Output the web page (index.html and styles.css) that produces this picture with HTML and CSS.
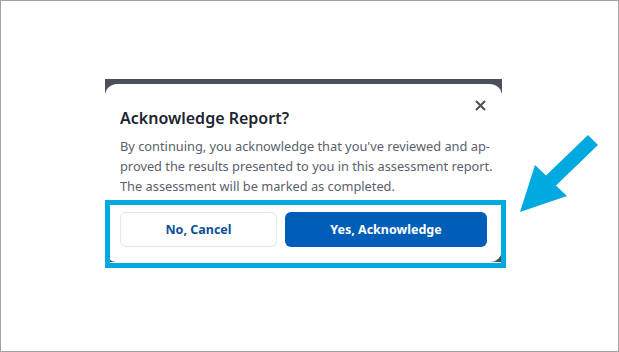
FILE: index.html
```html
<!DOCTYPE html>
<html lang="en">
<head>
  <meta charset="UTF-8" />
  <title>Acknowledge Report</title>
  <link rel="stylesheet" href="styles.css">
</head>
<body>
  <div class="frame">
    <div class="dialog-shot">
      <div class="dialog">
        <div class="dialog-head">
          <h2>Acknowledge Report?</h2>
          <button class="close" aria-label="Close">
            <svg width="11" height="11" viewBox="0 0 11 11"><path d="M1 1L10 10M10 1L1 10" stroke="#4b5159" stroke-width="2"/></svg>
          </button>
        </div>
        <p class="dialog-text">By continuing, you acknowledge that you've reviewed and ap-<br>proved the results presented to you in this assessment report.<br>The assessment will be marked as completed.</p>
        <div class="dialog-actions">
          <button class="btn btn-cancel">No, Cancel</button>
          <button class="btn btn-primary">Yes, Acknowledge</button>
        </div>
      </div>
      <div class="highlight"></div>
    </div>

    <svg class="pointer" width="100" height="90" viewBox="510 130 100 90">
      <polygon points="588,135 598,145 556,185.5 567,196 520,212 535,165 546,175.5" fill="#00a9e0"/>
    </svg>
  </div>
</body>
</html>
```

FILE: styles.css
```css
body {
  margin: 0;
  background-color: #fff;
  font-family: "Noto Sans", Arial, sans-serif;
}

.frame {
  position: relative;
  width: 619px;
  height: 352px;
  box-sizing: border-box;
  border: 1px solid #a3a3a3;
  padding: 78px 0 0 104px;
}

.dialog-shot {
  position: relative;
  width: 397px;
  background-color: #4b5159;
  padding-top: 5px;
}

.dialog {
  background-color: #fff;
  border-radius: 12px;
  padding: 16px 15px 15px 15px;
}

.dialog-head {
  display: flex;
  justify-content: space-between;
  align-items: flex-start;
}

.dialog-head h2 {
  margin: 7px 0 0 0;
  font-size: 16px;
  font-weight: 600;
  color: #1e2530;
  line-height: 22px;
}

.close {
  background: none;
  border: none;
  padding: 0;
  margin: 0 1px 0 0;
  line-height: 0;
  cursor: pointer;
}

.dialog-text {
  margin: 7px 0 0 0;
  font-size: 12.8px;
  line-height: 20px;
  color: #5a616b;
  white-space: nowrap;
}

.dialog-actions {
  display: flex;
  gap: 8px;
  margin-top: 16px;
}

.btn {
  height: 35px;
  border-radius: 6px;
  font-family: inherit;
  font-size: 12.5px;
  font-weight: 700;
  cursor: pointer;
}

.btn-cancel {
  width: 157px;
  background-color: #fff;
  border: 1px solid #e6e6e6;
  color: #0b4f9c;
}

.btn-primary {
  flex: 1;
  background-color: #005eb8;
  border: none;
  color: #fff;
}

.highlight {
  position: absolute;
  left: 0;
  top: 121px;
  width: 401px;
  height: 68px;
  box-sizing: border-box;
  border: 5px solid #00a9e0;
}

.pointer {
  position: absolute;
  left: 509px;
  top: 129px;
}
```
